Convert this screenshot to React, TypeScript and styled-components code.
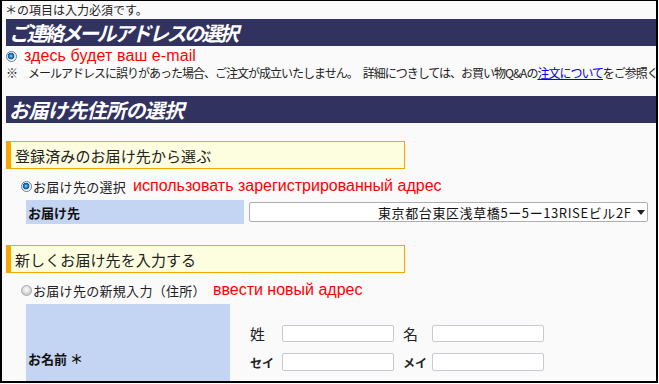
import React from 'react';
import styled, { createGlobalStyle } from 'styled-components';

const Global = createGlobalStyle`
  html, body { margin: 0; padding: 0; background: #fff; }
  body { font-family: "Noto Sans CJK JP", "Noto Sans", sans-serif; color: #222; }
`;

const Frame = styled.div`
  width: 658px;
  height: 383px;
  box-sizing: border-box;
  border: 1px solid #000;
  border-left-width: 2px;
  border-right-width: 2px;
  border-bottom-width: 2px;
  background: #fafafa;
  overflow: hidden;
  padding-left: 4px;
`;

const Required = styled.div`
  height: 18px;
  line-height: 18px;
  font-size: 12px;
  margin-left: -1px;
  color: #222;
`;

const Heading = styled.div<{ $tight?: boolean; $gap?: number }>`
  height: 27px;
  margin-top: ${p => p.$gap ?? 0}px;
  background: #323260;
  color: #fff;
  display: flex;
  align-items: center;
  padding-left: 3px;
  font-size: 20px;
  font-weight: bold;
  font-style: italic;
  letter-spacing: ${p => (p.$tight ? '-2.5px' : '-0.6px')};
  white-space: nowrap;
`;

const RadioRow = styled.div<{ $indent?: number; $h?: number; $pt?: number }>`
  display: flex;
  align-items: center;
  height: ${p => p.$h ?? 20}px;
  box-sizing: border-box;
  padding-top: ${p => p.$pt ?? 0}px;
  margin-left: ${p => p.$indent ?? 0}px;
  white-space: nowrap;
`;

const Radio = styled.span<{ $on?: boolean }>`
  flex: none;
  width: 11px;
  height: 11px;
  border-radius: 50%;
  box-sizing: border-box;
  border: 1px solid ${p => (p.$on ? '#6d7b8a' : '#a9a9a9')};
  background: ${p =>
    p.$on
      ? 'radial-gradient(circle at 45% 45%, #8fe0ff 0, #2a8ad0 1.5px, #15508f 3px, #dfe6ee 3.6px, #ffffff 5px)'
      : 'radial-gradient(circle at 50% 40%, #fbfbfb 0, #e2e2e2 3px, #c8c8c8 5px)'};
`;

const OptionLabel = styled.span`
  font-size: 13px;
  color: #222;
  margin-left: 1px;
  letter-spacing: 0.3px;
`;

const RedNote = styled.span<{ $boxed?: boolean }>`
  font-family: "Liberation Sans", Arial, sans-serif;
  font-size: 16px;
  letter-spacing: ${p => (p.$boxed ? '0.1px' : '0')};
  color: #ff0000;
  margin-left: ${p => (p.$boxed ? 4 : 7)}px;
  padding: ${p => (p.$boxed ? '0 2px 0 3px' : '0')};
  background: ${p => (p.$boxed ? '#ffffff' : 'transparent')};
  line-height: 18px;
`;

const Notice = styled.div`
  height: 14px;
  line-height: 14px;
  font-size: 12px;
  white-space: nowrap;
  letter-spacing: -1px;
  color: #222;
`;

const Mark = styled.span`
  letter-spacing: 0;
  margin-right: 10px;
`;

const Link = styled.a`
  color: #0000ee;
  text-decoration: underline;
`;

const SectionBox = styled.div<{ $gap: number }>`
  margin-top: ${p => p.$gap}px;
  width: 399px;
  height: 28px;
  box-sizing: border-box;
  border: 1px solid #f7a500;
  border-left-width: 5px;
  background: #fdfde0;
  display: flex;
  align-items: center;
  padding-left: 4px;
  font-size: 15px;
  letter-spacing: 0.1px;
  color: #222;
  white-space: nowrap;
`;

const FieldRow = styled.div`
  display: flex;
  margin-left: 20px;
`;

const LabelCell = styled.div<{ $w: number; $h: number }>`
  width: ${p => p.$w}px;
  height: ${p => p.$h}px;
  flex: none;
  background: #c4d4f3;
  display: flex;
  align-items: center;
  padding-left: 2px;
  box-sizing: border-box;
  font-size: 13px;
  font-weight: bold;
  color: #111;
  white-space: nowrap;
`;

const SelectBox = styled.div`
  margin-left: 5px;
  margin-top: 2px;
  width: 399px;
  height: 20px;
  box-sizing: border-box;
  border: 1px solid #aeaeb4;
  border-radius: 2px;
  background: #fff;
  display: flex;
  align-items: center;
  padding-left: 128px;
  font-size: 13px;
  color: #111;
  white-space: nowrap;
`;

const SelectText = styled.span`
  flex: 1;
  letter-spacing: 0.6px;
`;

const Caret = styled.span`
  width: 0;
  height: 0;
  border-left: 4px solid transparent;
  border-right: 4px solid transparent;
  border-top: 5px solid #222;
  margin-right: 2px;
`;

const NameFields = styled.div`
  padding-left: 20px;
  padding-top: 19px;
  display: flex;
  flex-direction: column;
  gap: 9px;
`;

const NameLine = styled.div`
  display: flex;
  align-items: center;
`;

const NameLabel = styled.span<{ $small?: boolean; $lead?: number }>`
  width: ${p => (p.$lead ? 29 : 32)}px;
  margin-left: ${p => p.$lead ?? 0}px;
  font-size: ${p => (p.$small ? 12 : 15)}px;
  font-weight: ${p => (p.$small ? 'bold' : 'normal')};
  color: #222;
  white-space: nowrap;
`;

const TextInput = styled.input<{ $h: number }>`
  width: 112px;
  height: ${p => p.$h}px;
  box-sizing: border-box;
  border: 1px solid #c8c9d2;
  border-radius: 2px;
  background: #fff;
  padding: 0 3px;
  margin: 0;
  outline: none;
`;

export default function App() {
  return (
    <>
      <Global />
      <Frame>
        <Required>＊の項目は入力必須です。</Required>
        <Heading $tight>ご連絡メールアドレスの選択</Heading>
        <RadioRow>
          <Radio $on />
          <RedNote $boxed>здесь будет ваш e-mail</RedNote>
        </RadioRow>
        <Notice>
          <Mark>※</Mark>メールアドレスに誤りがあった場合、ご注文が成立いたしません。　詳細につきしては、お買い物Q&amp;Aの
          <Link href="#">注文について</Link>をご参照ください。
        </Notice>
        <Heading $gap={16}>お届け先住所の選択</Heading>

        <SectionBox $gap={18}>登録済みのお届け先から選ぶ</SectionBox>
        <RadioRow $indent={15} $h={31} $pt={3}>
          <Radio $on />
          <OptionLabel>お届け先の選択</OptionLabel>
          <RedNote>использовать зарегистрированный адрес</RedNote>
        </RadioRow>
        <FieldRow>
          <LabelCell $w={218} $h={24}>お届け先</LabelCell>
          <SelectBox>
            <SelectText>東京都台東区浅草橋5ー5ー13RISEビル2F</SelectText>
            <Caret />
          </SelectBox>
        </FieldRow>

        <SectionBox $gap={21}>新しくお届け先を入力する</SectionBox>
        <RadioRow $indent={15} $h={31} $pt={3}>
          <Radio />
          <OptionLabel>お届け先の新規入力（住所）</OptionLabel>
          <RedNote>ввести новый адрес</RedNote>
        </RadioRow>
        <FieldRow>
          <LabelCell $w={204} $h={108}>お名前 ＊</LabelCell>
          <NameFields>
            <NameLine>
              <NameLabel>姓</NameLabel>
              <TextInput $h={17} />
              <NameLabel $lead={9}>名</NameLabel>
              <TextInput $h={17} />
            </NameLine>
            <NameLine>
              <NameLabel $small>セイ</NameLabel>
              <TextInput $h={18} />
              <NameLabel $small $lead={9}>メイ</NameLabel>
              <TextInput $h={18} />
            </NameLine>
          </NameFields>
        </FieldRow>
      </Frame>
    </>
  );
}
